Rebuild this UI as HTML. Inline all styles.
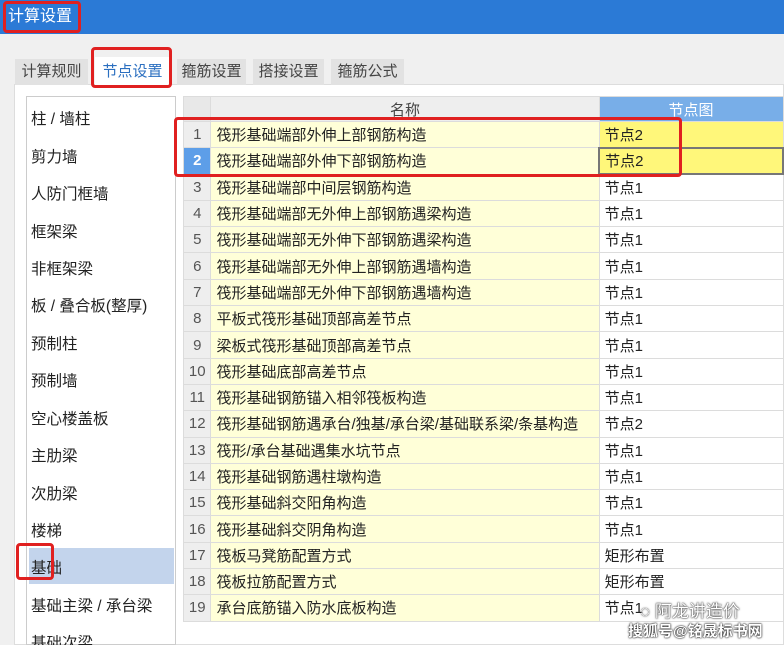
<!DOCTYPE html><html><head><meta charset="utf-8"><style>
*{margin:0;padding:0;box-sizing:border-box}
html,body{width:784px;height:645px;overflow:hidden}
body{background:#f0f0f0;font-family:"Liberation Sans","Noto Sans CJK SC",sans-serif;position:relative;font-size:15px;color:#222}
.abs{position:absolute}
.title{left:0;top:0;width:784px;height:34px;background:#2b7ad6;color:#fff;font-size:16px;line-height:34px;padding-left:8px}
.tab{top:59px;height:26px;line-height:26px;font-size:15px;color:#444;background:#e2e2e2;text-align:center}
.panel{left:14px;top:84px;width:770px;height:561px;background:#fff;border:1px solid #ddd}
.list{left:26px;top:96px;width:150px;height:549px;border:1px solid #ccc;background:#fff}
.li{position:absolute;left:4px;font-size:15.5px;color:#222;white-space:nowrap}
.red{border:3px solid #e02020;border-radius:4px}
table{position:absolute;left:183px;top:96px;border-collapse:collapse;font-size:15px;table-layout:fixed}
td{height:26.3px;border:1px solid #dcdcdc;padding:0 5px;white-space:nowrap;overflow:hidden}
td.n{width:28px;background:#eeeeee;color:#555;text-align:center;padding:0}
td.m{width:389px;background:#ffffd8}
td.v{width:190px;background:#fff}
tr.h td{height:25px}
</style></head><body>
<div class="abs title">计算设置</div>
<div class="abs red" style="left:3px;top:1px;width:78px;height:32px"></div>
<div class="abs panel"></div>
<div class="abs tab" style="left:15px;width:73px">计算规则</div>
<div class="abs tab" style="left:95px;width:75px;background:#fff;color:#2b6fc0;top:57px;height:30px;line-height:30px">节点设置</div>
<div class="abs tab" style="left:177px;width:69px">箍筋设置</div>
<div class="abs tab" style="left:253px;width:71px">搭接设置</div>
<div class="abs tab" style="left:331px;width:73px">箍筋公式</div>
<div class="abs red" style="left:91px;top:47px;width:81px;height:41px"></div>
<div class="abs list">
<div class="abs" style="left:2px;top:451px;width:145px;height:36px;background:#c3d4ec"></div>
<div class="li" style="top:10px">柱 / 墙柱</div>
<div class="li" style="top:48px">剪力墙</div>
<div class="li" style="top:85px">人防门框墙</div>
<div class="li" style="top:123px">框架梁</div>
<div class="li" style="top:160px">非框架梁</div>
<div class="li" style="top:197px">板 / 叠合板(整厚)</div>
<div class="li" style="top:235px">预制柱</div>
<div class="li" style="top:272px">预制墙</div>
<div class="li" style="top:310px">空心楼盖板</div>
<div class="li" style="top:347px">主肋梁</div>
<div class="li" style="top:385px">次肋梁</div>
<div class="li" style="top:422px">楼梯</div>
<div class="li" style="top:459px">基础</div>
<div class="li" style="top:497px">基础主梁 / 承台梁</div>
<div class="li" style="top:534px">基础次梁</div>
</div>
<div class="abs red" style="left:16px;top:543px;width:38px;height:37px"></div>
<table>
<tr class="h"><td class="n" style="background:#e8e8e8"></td><td class="m" style="background:#eeeeee;text-align:center;color:#444">名称</td><td class="v" style="background:#78aee8;color:#fff;text-align:center">节点图</td></tr>
<tr><td class="n">1</td><td class="m">筏形基础端部外伸上部钢筋构造</td><td class="v" style="background:#fff77a">节点2</td></tr>
<tr><td class="n" style="background:#5d9ee8;color:#fff;font-weight:bold">2</td><td class="m">筏形基础端部外伸下部钢筋构造</td><td class="v" style="background:#fff77a;border:2px solid #777">节点2</td></tr>
<tr><td class="n">3</td><td class="m">筏形基础端部中间层钢筋构造</td><td class="v">节点1</td></tr>
<tr><td class="n">4</td><td class="m">筏形基础端部无外伸上部钢筋遇梁构造</td><td class="v">节点1</td></tr>
<tr><td class="n">5</td><td class="m">筏形基础端部无外伸下部钢筋遇梁构造</td><td class="v">节点1</td></tr>
<tr><td class="n">6</td><td class="m">筏形基础端部无外伸上部钢筋遇墙构造</td><td class="v">节点1</td></tr>
<tr><td class="n">7</td><td class="m">筏形基础端部无外伸下部钢筋遇墙构造</td><td class="v">节点1</td></tr>
<tr><td class="n">8</td><td class="m">平板式筏形基础顶部高差节点</td><td class="v">节点1</td></tr>
<tr><td class="n">9</td><td class="m">梁板式筏形基础顶部高差节点</td><td class="v">节点1</td></tr>
<tr><td class="n">10</td><td class="m">筏形基础底部高差节点</td><td class="v">节点1</td></tr>
<tr><td class="n">11</td><td class="m">筏形基础钢筋锚入相邻筏板构造</td><td class="v">节点1</td></tr>
<tr><td class="n">12</td><td class="m">筏形基础钢筋遇承台/独基/承台梁/基础联系梁/条基构造</td><td class="v">节点2</td></tr>
<tr><td class="n">13</td><td class="m">筏形/承台基础遇集水坑节点</td><td class="v">节点1</td></tr>
<tr><td class="n">14</td><td class="m">筏形基础钢筋遇柱墩构造</td><td class="v">节点1</td></tr>
<tr><td class="n">15</td><td class="m">筏形基础斜交阳角构造</td><td class="v">节点1</td></tr>
<tr><td class="n">16</td><td class="m">筏形基础斜交阴角构造</td><td class="v">节点1</td></tr>
<tr><td class="n">17</td><td class="m">筏板马凳筋配置方式</td><td class="v">矩形布置</td></tr>
<tr><td class="n">18</td><td class="m">筏板拉筋配置方式</td><td class="v">矩形布置</td></tr>
<tr><td class="n">19</td><td class="m">承台底筋锚入防水底板构造</td><td class="v">节点1</td></tr>
</table>
<div class="abs red" style="left:174px;top:117px;width:508px;height:60px"></div>
<div class="abs" style="left:640px;top:597px;font-size:17px;color:#fff;text-shadow:0 0 2px #333,0 0 1px #000">◌ 阿龙讲造价</div>
<div class="abs" style="left:628px;top:620px;font-size:15px;color:#fff;font-weight:bold;text-shadow:0 0 2px #000,0 0 1px #000">搜狐号@铭晟标书网</div>
</body></html>
